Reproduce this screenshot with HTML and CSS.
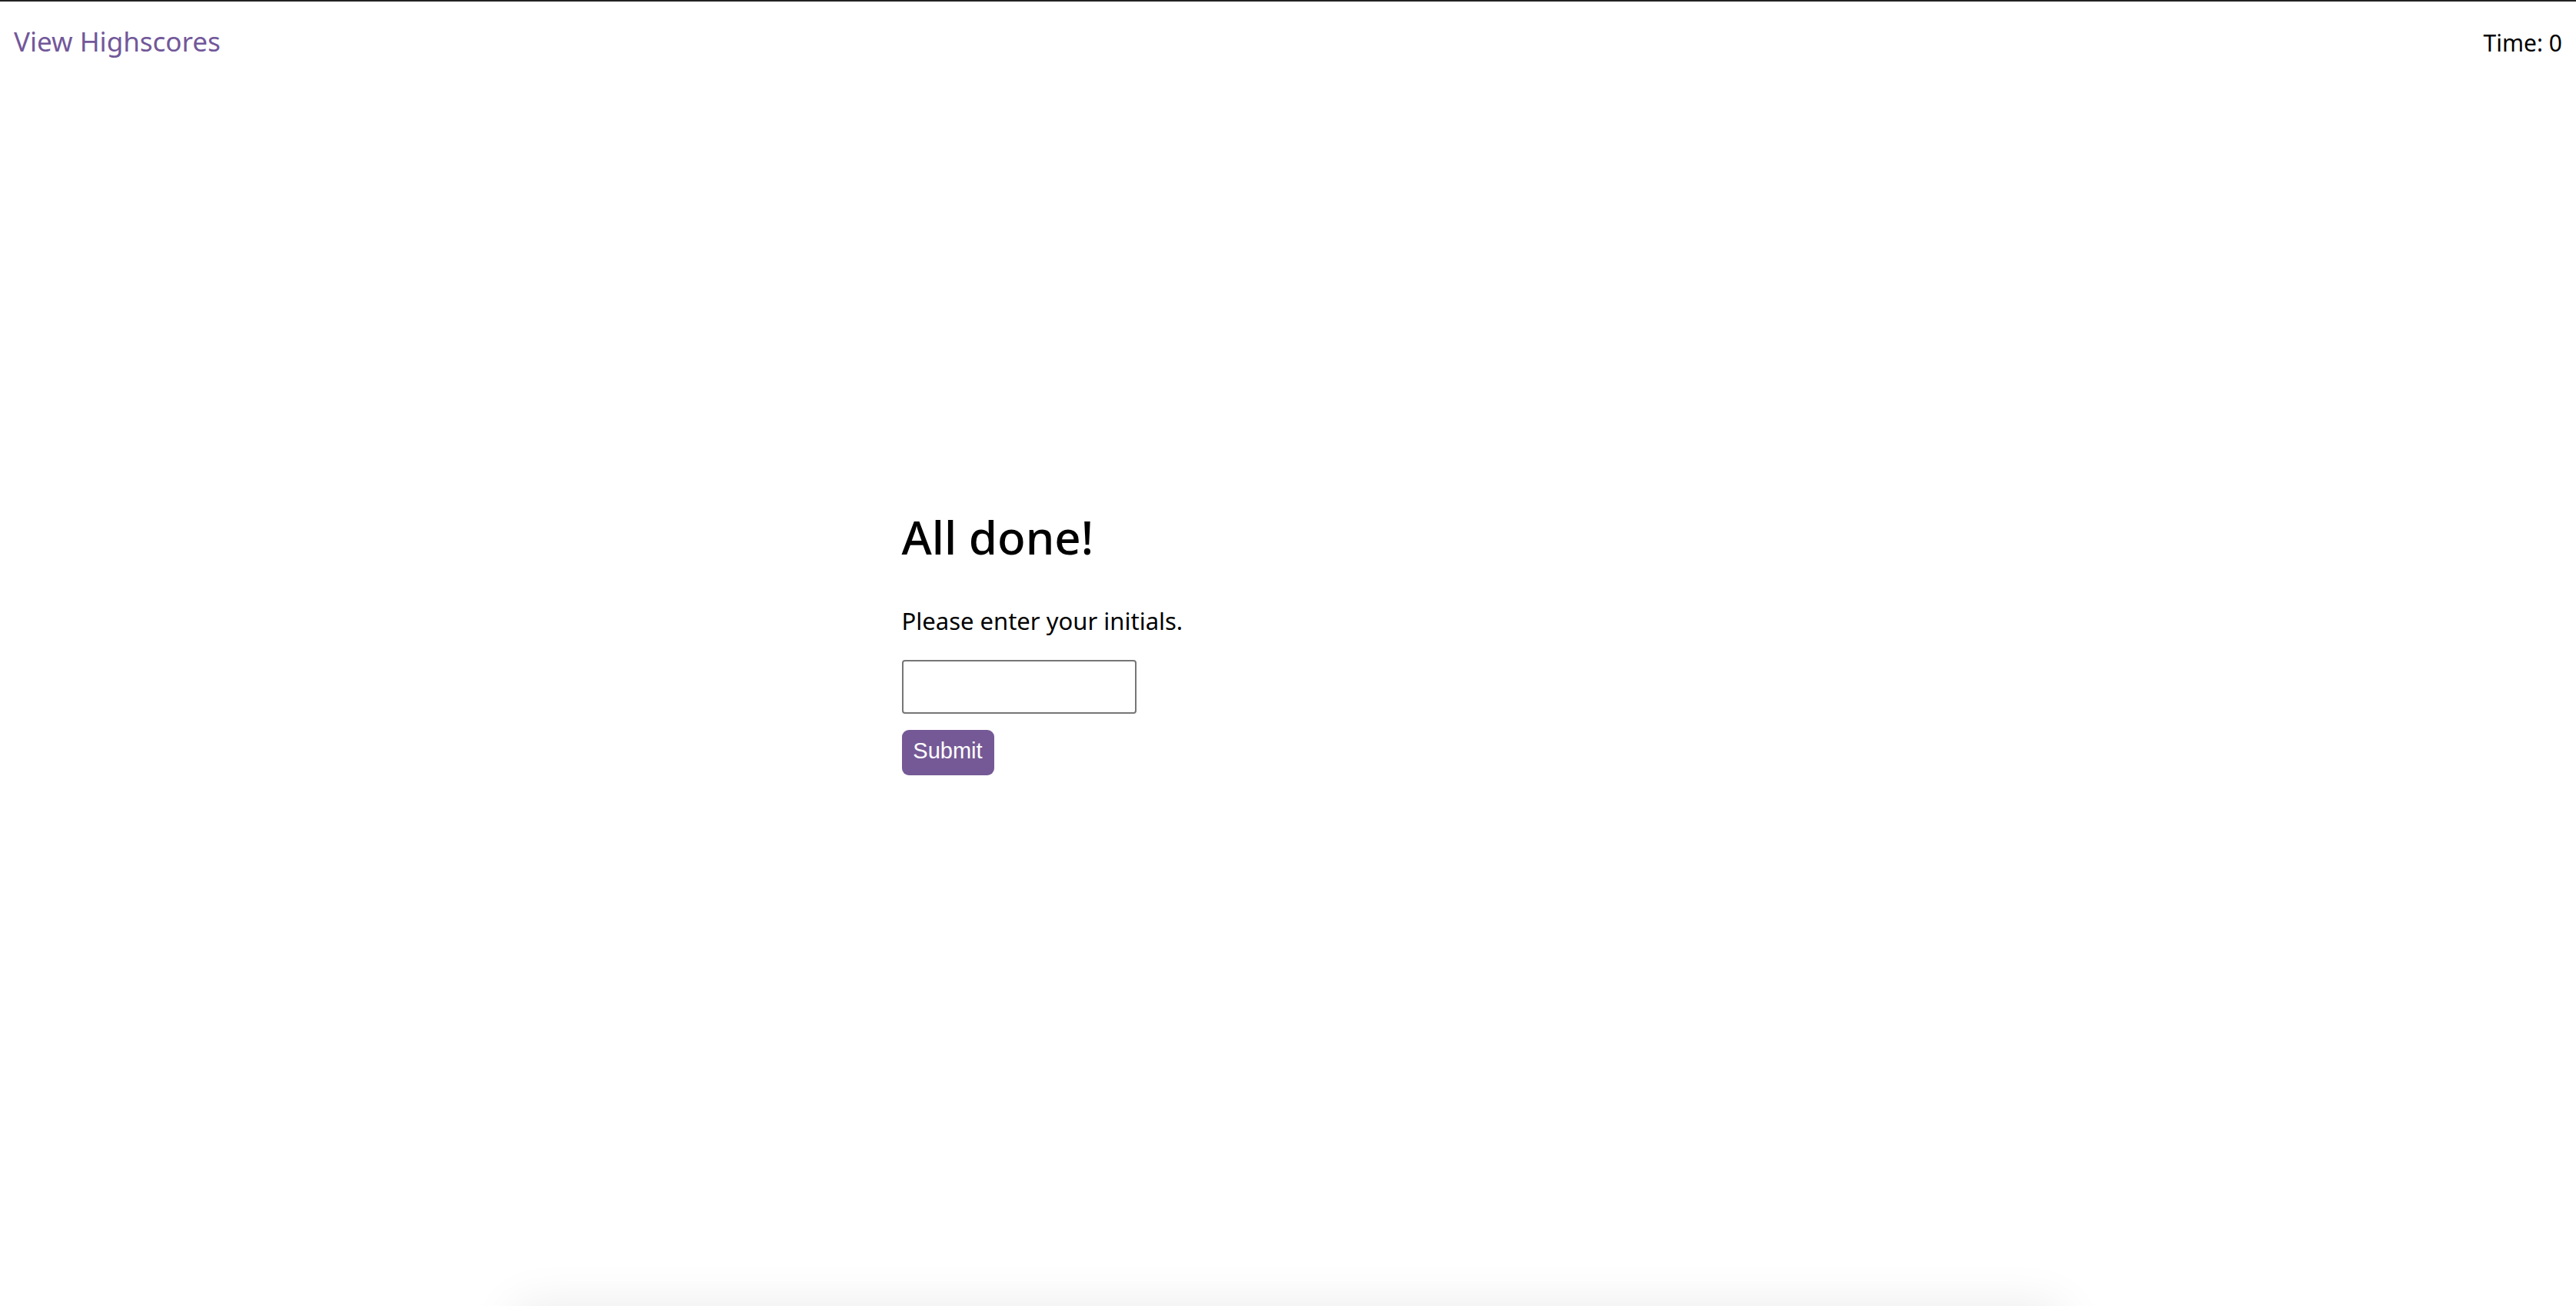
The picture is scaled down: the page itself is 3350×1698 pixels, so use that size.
FILE: index.html
```html
<!DOCTYPE html>
<html lang="en">
<head>
<meta charset="utf-8">
<title>Quiz</title>
<link rel="stylesheet" href="styles.css">
</head>
<body>
<header class="topbar">
  <a class="highscores-link" href="#">View Highscores</a>
  <div class="timer">Time: 0</div>
</header>
<main class="stage">
  <section class="done">
    <h1 class="done-title">All done!</h1>
    <p class="done-text">Please enter your initials.</p>
    <form class="done-form">
      <input class="initials" type="text">
      <button class="submit-btn" type="button">Submit</button>
    </form>
  </section>
</main>
<div class="card"></div>
</body>
</html>
```

FILE: styles.css
```css
html, body {
  margin: 0;
  padding: 0;
  background: #ffffff;
}
body {
  border-top: 2px solid #222222;
  font-family: "Noto Sans", "Open Sans", sans-serif;
  color: #000;
}
.topbar {
  box-sizing: border-box;
  display: flex;
  justify-content: space-between;
  align-items: baseline;
  padding: 32px 18px 0 18px;
  height: 84px;
}
.highscores-link {
  color: #72589a;
  text-decoration: none;
  font-size: 35px;
  line-height: 40px;
}
.timer {
  font-size: 30px;
  line-height: 40px;
}
.stage {
  height: 1614px;
}
.done {
  width: 30%;
  margin: 0 auto;
  padding-top: 572px;
  display: flex;
  flex-direction: column;
  align-items: flex-start;
}
.done-title {
  margin: 0;
  font-size: 60px;
  line-height: 80px;
  font-weight: 500;
}
.done-text {
  margin: 49px 0 0 0;
  font-size: 31px;
  line-height: 40px;
}
.done-form {
  display: flex;
  flex-direction: column;
  align-items: flex-start;
  margin-top: 31px;
}
.initials {
  box-sizing: border-box;
  width: 305px;
  height: 70px;
  border: 2px solid #767676;
  border-radius: 4px;
  margin: 0;
  padding: 0 8px;
  font-size: 28px;
}
.submit-btn {
  box-sizing: border-box;
  margin-top: 21px;
  width: 120px;
  height: 59px;
  border: none;
  border-radius: 9px;
  background: #755996;
  color: #ffffff;
  font-family: "Liberation Sans", Arial, sans-serif;
  font-size: 29px;
  padding: 0 0 4px 0;
}
.card {
  width: 60%;
  height: 400px;
  margin: 0 auto;
  box-shadow: 0 0 60px rgba(0, 0, 0, 0.09);
}
```
